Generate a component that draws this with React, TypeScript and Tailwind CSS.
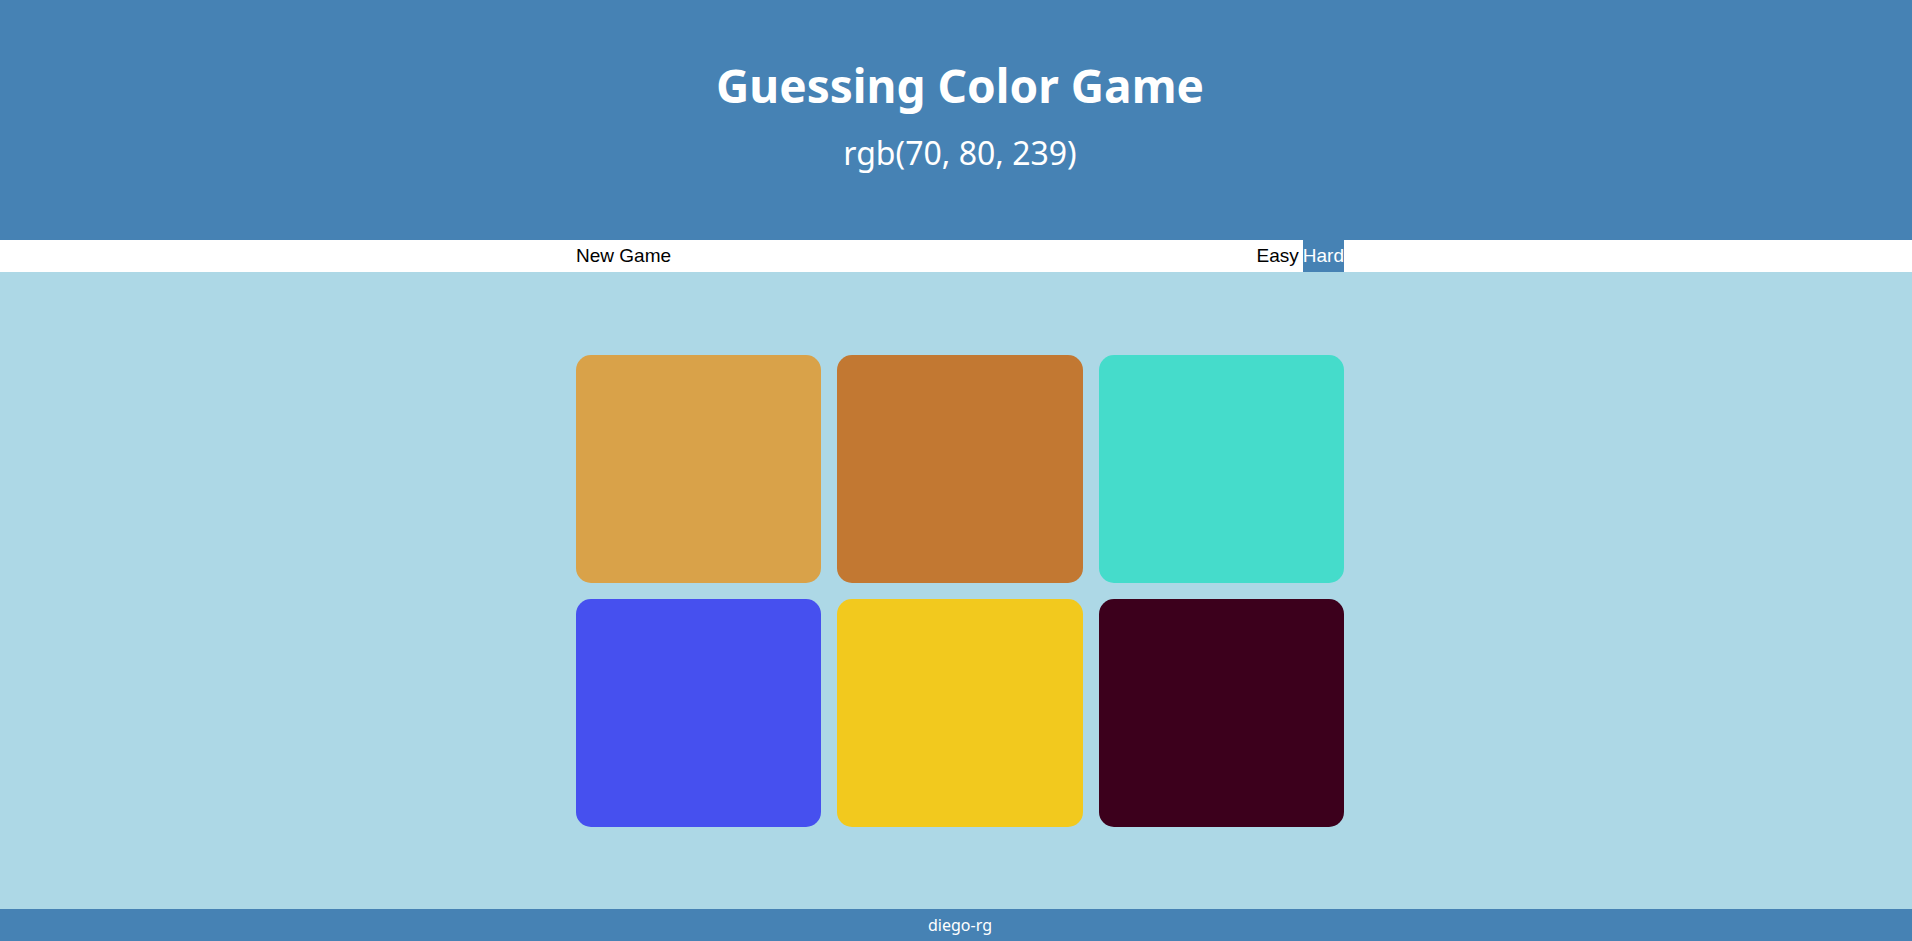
import { useState } from 'react';

const initialColors = [
  'rgb(217, 162, 73)',
  'rgb(194, 120, 50)',
  'rgb(69, 220, 203)',
  'rgb(70, 80, 239)',
  'rgb(242, 201, 30)',
  'rgb(60, 0, 28)',
];

const randomColor = () => {
  const r = Math.floor(Math.random() * 256);
  const g = Math.floor(Math.random() * 256);
  const b = Math.floor(Math.random() * 256);
  return `rgb(${r}, ${g}, ${b})`;
};

interface SquareProps {
  color: string;
  onPick: () => void;
}

function Square({ color, onPick }: SquareProps) {
  return (
    <div
      onClick={onPick}
      className="h-[228px] rounded-[15px] cursor-pointer transition-opacity"
      style={{ backgroundColor: color }}
    />
  );
}

function App() {
  const [colors, setColors] = useState<string[]>(initialColors);
  const [target, setTarget] = useState('rgb(70, 80, 239)');
  const [hard, setHard] = useState(true);
  const [hidden, setHidden] = useState<number[]>([]);

  const newGame = (isHard = hard) => {
    const next = Array.from({ length: isHard ? 6 : 3 }, randomColor);
    setColors(next);
    setTarget(next[Math.floor(Math.random() * next.length)]);
    setHidden([]);
  };

  const handlePick = (index: number) => {
    if (colors[index] === target) {
      setColors(colors.map(() => target));
      setHidden([]);
    } else {
      setHidden([...hidden, index]);
    }
  };

  return (
    <div className="min-h-screen flex flex-col bg-[#add8e6]" style={{ fontFamily: '"Noto Sans", sans-serif' }}>
      <header className="h-[240px] bg-[#4682b4] text-white flex flex-col items-center pt-[62px] pl-2 gap-[29px]">
        <h1 className="text-[46px] leading-[46px] font-bold">Guessing Color Game</h1>
        <p className="text-[32px] leading-[32px]">{target}</p>
      </header>

      <nav className="h-8 bg-white flex justify-center pl-2">
        <div className="w-[768px] flex items-center justify-between text-[19px] font-['Liberation_Sans',Arial,sans-serif]">
          <button onClick={() => newGame()} className="h-full text-black">
            New Game
          </button>
          <div className="h-full flex items-center gap-1">
            <button
              onClick={() => {
                setHard(false);
                newGame(false);
              }}
              className={`h-full ${!hard ? 'bg-[#4682b4] text-white' : 'text-black'}`}
            >
              Easy
            </button>
            <button
              onClick={() => {
                setHard(true);
                newGame(true);
              }}
              className={`h-full ${hard ? 'bg-[#4682b4] text-white' : 'text-black'}`}
            >
              Hard
            </button>
          </div>
        </div>
      </nav>

      <main className="flex-1 flex justify-center pt-[83px] pl-2">
        <div className="w-[768px] grid grid-cols-3 gap-4 content-start">
          {colors.map((color, i) => (
            <Square
              key={i}
              color={hidden.includes(i) ? 'transparent' : color}
              onPick={() => handlePick(i)}
            />
          ))}
        </div>
      </main>

      <footer className="h-8 bg-[#4682b4] text-white flex items-center justify-center pl-2 text-base">
        diego-rg
      </footer>
    </div>
  );
}

export default App;
